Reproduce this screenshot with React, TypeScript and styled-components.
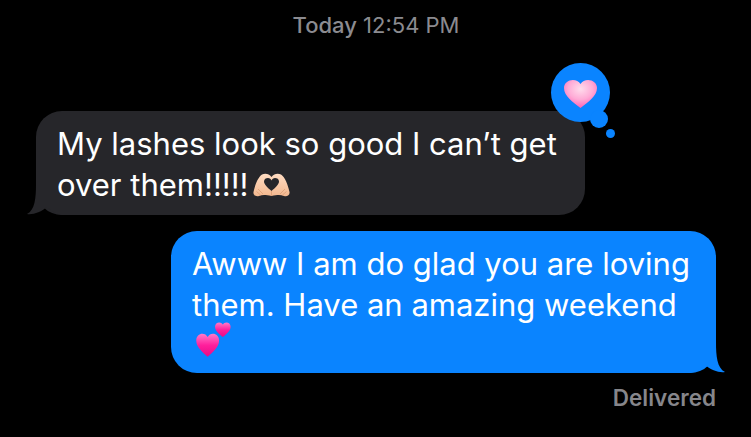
import styled, { createGlobalStyle } from 'styled-components'

const GlobalStyle = createGlobalStyle`
  html, body {
    margin: 0;
    background: #000000;
  }
`

const Page = styled.div`
  width: 751px;
  height: 437px;
  overflow: hidden;
  background: #000000;
  box-sizing: border-box;
  padding: 11px 35px 0 36px;
  display: flex;
  flex-direction: column;
  font-family: Inter, "Liberation Sans", sans-serif;
`

const Timestamp = styled.div`
  align-self: center;
  height: 28px;
  line-height: 29px;
  font-size: 22px;
  color: #8b8b90;
  margin-bottom: 72px;
  white-space: nowrap;

  b {
    font-weight: 500;
  }
`

const Thread = styled.div`
  display: flex;
  flex-direction: column;
  gap: 16px;
`

const Bubble = styled.div<{ $me?: boolean }>`
  position: relative;
  width: ${p => (p.$me ? 545 : 549)}px;
  align-self: ${p => (p.$me ? 'flex-end' : 'flex-start')};
  box-sizing: border-box;
  padding: 12px 21px 10px;
  border-radius: 26px;
  background: ${p => (p.$me ? '#0a84ff' : '#26262a')};
  color: #ffffff;
  font-size: 31px;
  line-height: 41px;
`

const TextLine = styled.div`
  position: relative;
  z-index: 1;
  display: flex;
  align-items: center;
  white-space: nowrap;
`

const EmojiRow = styled.div`
  display: flex;
  height: 38px;
`

const Tail = styled.svg<{ $me?: boolean }>`
  position: absolute;
  bottom: 0;
  width: 36px;
  height: 31px;
  ${p => (p.$me ? 'right: -10px;' : 'left: -10px; transform: scaleX(-1);')}
`

const Reaction = styled.div`
  position: absolute;
  top: -48px;
  right: -25px;
  width: 59px;
  height: 59px;
  border-radius: 50%;
  background: #0a84ff;
  display: flex;
  align-items: center;
  justify-content: center;

  &::before {
    content: '';
    position: absolute;
    left: 39px;
    top: 47px;
    width: 18px;
    height: 18px;
    border-radius: 50%;
    background: #0a84ff;
  }

  &::after {
    content: '';
    position: absolute;
    left: 55px;
    top: 66px;
    width: 9px;
    height: 9px;
    border-radius: 50%;
    background: #0a84ff;
  }
`

const Delivered = styled.div`
  align-self: flex-end;
  margin-top: 13px;
  font-size: 22.5px;
  line-height: 24px;
  font-weight: 600;
  color: #86868b;
`

const TailShape = ({ me, fill }: { me?: boolean; fill: string }) => (
  <Tail $me={me} viewBox="0 0 36 31">
    <path d="M26 0C26 14 27 26 35 30C29 31 21 28 15 23C11 27 6 30 0 31L0 0Z" fill={fill} />
  </Tail>
)

const HEART = 'M16 29C9 23 1 17 1 9C1 4 5 1 9 1C12 1 14.500 2.500 16 5C17.500 2.500 20 1 23 1C27 1 31 4 31 9C31 17 23 23 16 29Z'

const PinkHeart = () => (
  <svg
    width="33"
    height="28"
    viewBox="1 1 30 28"
    preserveAspectRatio="none"
    style={{ position: 'relative', zIndex: 1, marginTop: 3 }}
  >
    <defs>
      <radialGradient id="pale" cx="50%" cy="32%" r="68%">
        <stop offset="0%" stopColor="#ffdcec" />
        <stop offset="55%" stopColor="#ffaad6" />
        <stop offset="100%" stopColor="#ff62b6" />
      </radialGradient>
    </defs>
    <path d={HEART} fill="url(#pale)" />
  </svg>
)

const HandHeart = () => (
  <svg width="37" height="25" viewBox="0 0 37 25" style={{ marginLeft: 4, marginTop: 1 }}>
    <defs>
      <linearGradient id="skin" x1="0" y1="0" x2="0" y2="1">
        <stop offset="0%" stopColor="#ffdcc2" />
        <stop offset="100%" stopColor="#f3b88f" />
      </linearGradient>
    </defs>
    <path
      d="M0.500 19C2 12 5 4 9 1.500C12 0 16 0.500 18.500 4C21 0.500 25 0 28 1.500C32 4 35 12 36.500 19C37 22 34 24 31 23C27 21.500 24 22 18.500 23C13 22 10 21.500 6 23C3 24 0 22 0.500 19Z"
      fill="url(#skin)"
    />
    <path
      d="M18.500 18C15 15 11 11.500 11 8.500C11 6 13 5 15 5C16.500 5 18 6 18.500 7.500C19 6 20.500 5 22 5C24 5 26 6 26 8.500C26 11.500 22 15 18.500 18Z"
      fill="#26262a"
    />
    <path
      d="M18.500 18V23M5 16L10 21M3.500 18.500L7.500 22M32 16L27 21M33.500 18.500L29.500 22"
      stroke="#d99a70"
      strokeWidth="0.700"
      fill="none"
    />
  </svg>
)

const DoubleHearts = () => (
  <svg width="36" height="36" viewBox="0 0 36 36" style={{ display: 'block', marginLeft: 3, marginTop: -3 }}>
    <defs>
      <linearGradient id="hot" x1="0" y1="0" x2="0" y2="1">
        <stop offset="0%" stopColor="#ff7ac8" />
        <stop offset="50%" stopColor="#ff1f9c" />
        <stop offset="100%" stopColor="#e80c85" />
      </linearGradient>
    </defs>
    <g transform="translate(19.500 0) scale(0.52)">
      <path d={HEART} fill="url(#hot)" />
    </g>
    <g transform="translate(0.500 11) scale(0.76 0.82)">
      <path d={HEART} fill="url(#hot)" />
    </g>
  </svg>
)

const App: React.FC = () => {
  return (
    <Page>
      <GlobalStyle />
      <Timestamp>
        <b>Today</b> 12:54 PM
      </Timestamp>
      <Thread>
        <Bubble>
          <TailShape fill="#26262a" />
          <TextLine>My lashes look so good I can’t get</TextLine>
          <TextLine>
            over them!!!!!
            <HandHeart />
          </TextLine>
          <Reaction>
            <PinkHeart />
          </Reaction>
        </Bubble>
        <Bubble $me>
          <TailShape me fill="#0a84ff" />
          <TextLine>Awww I am do glad you are loving</TextLine>
          <TextLine>them. Have an amazing weekend</TextLine>
          <EmojiRow>
            <DoubleHearts />
          </EmojiRow>
        </Bubble>
      </Thread>
      <Delivered>Delivered</Delivered>
    </Page>
  )
}

export default App
